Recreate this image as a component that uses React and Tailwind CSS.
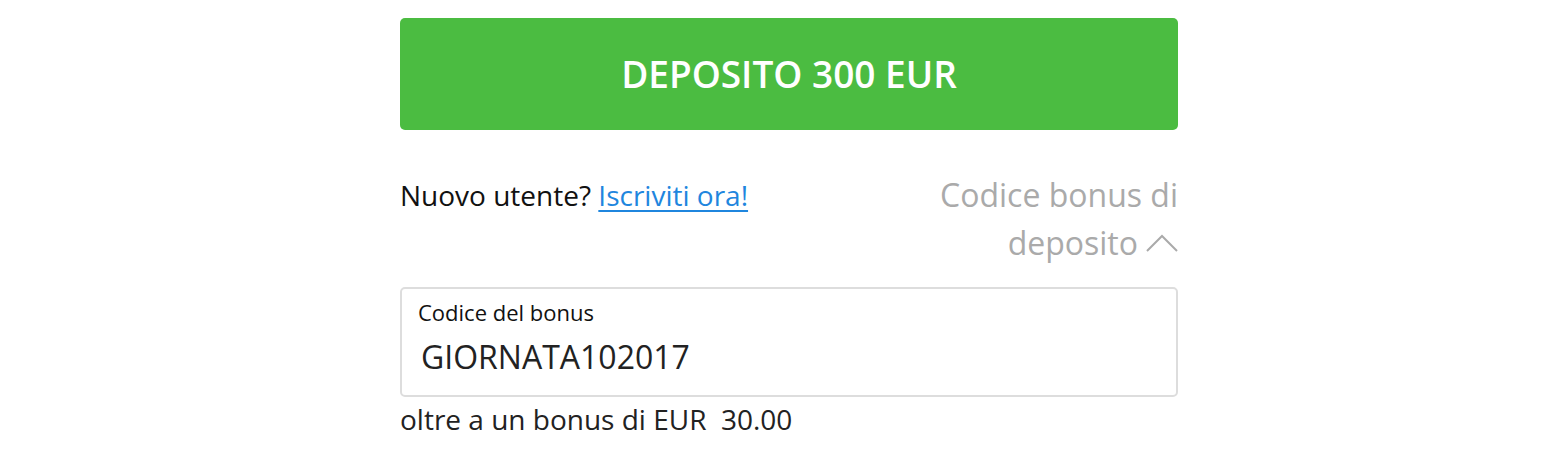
import React, { useState } from 'react';

export default function App() {
  const [code, setCode] = useState('GIORNATA102017');

  return (
    <div className="w-full bg-white" style={{ fontFamily: '"Open Sans", sans-serif' }}>
      <div className="w-[788px] mx-auto pl-[10px] pt-[18px]">
        {/* Deposit button */}
        <button className="w-full h-[112px] rounded-[5px] bg-[#4bbc41] text-white text-[37px] font-semibold flex items-center justify-center">
          DEPOSITO 300 EUR
        </button>

        {/* Signup + bonus toggle */}
        <div className="flex justify-between items-start mt-[41px]">
          <p className="text-[28px] leading-[48px] text-[#111]">
            Nuovo utente?{' '}
            <a href="#" className="text-[#1f86de] underline underline-offset-4">Iscriviti ora!</a>
          </p>
          <button className="w-[250px] text-right text-[32px] leading-[48px] text-[#aaaaaa]">
            Codice bonus di deposito
            <svg className="inline-block ml-[8px] -mt-[6px] w-[32px] h-[18px]" viewBox="0 0 32 18" fill="none" stroke="#aaaaaa" strokeWidth="2">
              <path d="M1 17 L16 2 L31 17" />
            </svg>
          </button>
        </div>

        {/* Bonus code input */}
        <label className="block mt-[20px] h-[110px] border-2 border-[#dddddd] rounded-[5px] px-[16px] pt-[9px]">
          <span className="block text-[22px] leading-[28px] text-[#111]">Codice del bonus</span>
          <input
            value={code}
            onChange={(e) => setCode(e.target.value)}
            className="w-full mt-[11px] pl-[3px] text-[32px] leading-[40px] text-[#222] outline-none bg-transparent"
          />
        </label>

        <p className="mt-[2px] text-[28px] leading-[40px] text-[#222] whitespace-pre">
          oltre a un bonus di EUR  30.00
        </p>
      </div>
    </div>
  );
}
